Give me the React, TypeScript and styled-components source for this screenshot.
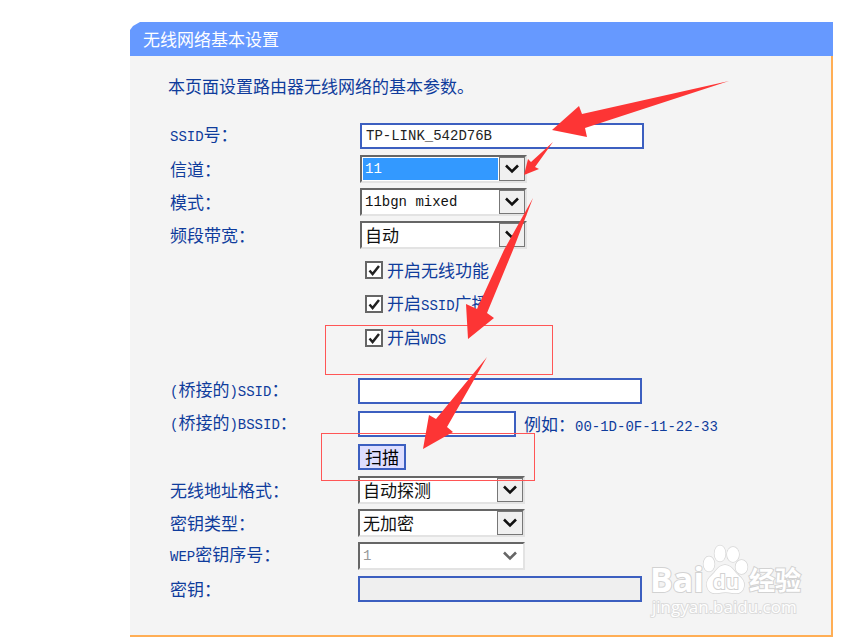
import React, { useState } from "react";
import styled, { createGlobalStyle, css } from "styled-components";

const cjk = `"Noto Sans CJK SC", sans-serif`;
const mono = `"Liberation Mono", "Noto Sans CJK SC", monospace`;
const navy = "#0f3c9c";

const GlobalStyle = createGlobalStyle`
  *, *::before, *::after { box-sizing: border-box; }
  body { margin: 0; background: #fff; font-family: ${cjk}; font-size: 17px; color: ${navy}; }
`;

const Page = styled.main`
  position: relative;
  padding: 22px 17px 0 130px;
`;

const Panel = styled.section`
  position: relative;
`;

const PanelTitle = styled.h1`
  margin: 0;
  padding: 0 13px;
  height: 34px;
  line-height: 34px;
  font-size: 17px;
  font-weight: 400;
  color: #fff;
  background: #6699ff;
  clip-path: polygon(0 8px, 3px 4px, 10px 0, 100% 0, 100% 100%, 0 100%);
`;

const PanelBody = styled.form`
  padding: 18px 0 30px 38px;
  background: #f4f4f4;
  border-right: 2px solid #ffae55;
  border-bottom: 2px solid #ffae55;
`;

const Intro = styled.p`
  margin: 0 0 21px;
  line-height: 24px;
`;

const Group = styled.div<{ $labels: number }>`
  display: grid;
  grid-template-columns: ${(p) => p.$labels}px 1fr;
  grid-auto-rows: 33px;
  align-items: center;
  padding-left: 2px;
`;

const Name = styled.label`
  line-height: 24px;
  white-space: nowrap;
`;

const Latin = styled.span`
  font-family: ${mono};
  font-size: 14px;
`;

const Cell = styled.div`
  grid-column: 2;
  display: flex;
  align-items: center;
  gap: 8px;
`;

const TextBox = styled.input<{ $width: number }>`
  width: ${(p) => p.$width}px;
  height: 26px;
  padding: 0 4px;
  border: 2px solid #3c5fc0;
  border-radius: 0;
  background: #fff;
  color: #222;
  font: 14px ${mono};
  outline: none;
  &:disabled { background: #efefef; }
`;

const ScanButton = styled.button`
  width: 48px;
  height: 26px;
  padding: 0;
  border: 2px solid #3c5fc0;
  background: #dedeff;
  color: #000;
  font: 17px/20px ${cjk};
`;

const SelectFrame = styled.div`
  display: grid;
  width: 167px;
  height: 28px;
  border: 2px solid;
  border-color: #666 #e3e3e3 #e3e3e3 #666;
  background: #fff;
`;

const Select = styled.select<{ $latin?: boolean; $active?: boolean }>`
  grid-area: 1 / 1;
  appearance: none;
  min-width: 0;
  margin: 1px;
  padding: 0 0 0 2px;
  border: 0;
  border-right: 26px solid transparent;
  border-radius: 0;
  outline: none;
  background: ${(p) => (p.$active ? "#3399ff" : "#fff")};
  background-clip: padding-box;
  color: ${(p) => (p.$active ? "#fff" : "#111")};
  font: 17px/22px ${cjk};
  ${(p) => p.$latin && css`font: 14px/22px ${mono};`}
  &:disabled { color: #999; opacity: 1; }
`;

const ArrowBox = styled.span<{ $flat?: boolean }>`
  grid-area: 1 / 1;
  justify-self: end;
  display: grid;
  place-items: center;
  width: 26px;
  pointer-events: none;
  border: ${(p) => (p.$flat ? "0" : "1px solid #777")};
  background: ${(p) => (p.$flat ? "#fff" : "#f0f0f0")};
`;

const Checks = styled.div<{ $indent: number }>`
  display: grid;
  grid-auto-rows: 34px;
  padding: 2px 0 19px ${(p) => p.$indent}px;
`;

const CheckLabel = styled.label`
  display: flex;
  align-items: center;
  gap: 4px;
  line-height: 24px;
`;

const CheckFrame = styled.span`
  display: grid;
  width: 18px;
  height: 18px;
  svg { grid-area: 1 / 1; pointer-events: none; visibility: hidden; }
  input:checked + svg { visibility: visible; }
`;

const CheckInput = styled.input`
  grid-area: 1 / 1;
  appearance: none;
  width: 18px;
  height: 18px;
  margin: 0;
  border: 2px solid #666;
  background: #fff;
`;

const Marks = styled.svg`
  position: absolute;
  top: 0;
  left: 0;
  pointer-events: none;
`;

const Watermark = styled.svg`
  position: absolute;
  right: 23px;
  bottom: 17px;
  pointer-events: none;
`;

function Dropdown(props: { id: string; options: string[]; latin?: boolean; active?: boolean; disabled?: boolean }) {
  const { id, options, latin, active, disabled } = props;
  return (
    <SelectFrame>
      <Select id={id} $latin={latin} $active={active} disabled={disabled}>
        {options.map((o) => <option key={o}>{o}</option>)}
      </Select>
      <ArrowBox $flat={disabled}>
        <svg width="16" height="10" viewBox="0 0 16 10">
          <path d="M2 1.5 L8 7.5 L14 1.5" fill="none" stroke={disabled ? "#666" : "#111"} strokeWidth="2.6" />
        </svg>
      </ArrowBox>
    </SelectFrame>
  );
}

function Check({ children }: { children: React.ReactNode }) {
  const [on, setOn] = useState(true);
  return (
    <CheckLabel>
      <CheckFrame>
        <CheckInput type="checkbox" checked={on} onChange={() => setOn(!on)} />
        <svg width="18" height="18" viewBox="0 0 18 18">
          <path d="M4.5 9.5 L7.6 13 L14 5" fill="none" stroke="#222" strokeWidth="2.5" />
        </svg>
      </CheckFrame>
      <span>{children}</span>
    </CheckLabel>
  );
}

export default function App() {
  return (
    <>
      <GlobalStyle />
      <Page>
        <Panel>
          <PanelTitle>无线网络基本设置</PanelTitle>
          <PanelBody onSubmit={(e) => e.preventDefault()}>
            <Intro>本页面设置路由器无线网络的基本参数。</Intro>

            <Group $labels={190}>
              <Name htmlFor="ssid"><Latin>SSID</Latin>号：</Name>
              <Cell><TextBox id="ssid" $width={284} defaultValue="TP-LINK_542D76B" /></Cell>
              <Name htmlFor="channel">信道：</Name>
              <Cell><Dropdown id="channel" options={["11"]} latin active /></Cell>
              <Name htmlFor="mode">模式：</Name>
              <Cell><Dropdown id="mode" options={["11bgn mixed"]} latin /></Cell>
              <Name htmlFor="band">频段带宽：</Name>
              <Cell><Dropdown id="band" options={["自动"]} /></Cell>
            </Group>

            <Checks $indent={197}>
              <Check>开启无线功能</Check>
              <Check>开启<Latin>SSID</Latin>广播</Check>
              <Check>开启<Latin>WDS</Latin></Check>
            </Checks>

            <Group $labels={188}>
              <Name htmlFor="bridge-ssid"><Latin>(</Latin>桥接的<Latin>)SSID</Latin>：</Name>
              <Cell><TextBox id="bridge-ssid" $width={284} /></Cell>
              <Name htmlFor="bridge-bssid"><Latin>(</Latin>桥接的<Latin>)BSSID</Latin>：</Name>
              <Cell>
                <TextBox id="bridge-bssid" $width={158} />
                <span>例如：<Latin>00-1D-0F-11-22-33</Latin></span>
              </Cell>
              <Cell><ScanButton type="button">扫描</ScanButton></Cell>
              <Name htmlFor="address">无线地址格式：</Name>
              <Cell><Dropdown id="address" options={["自动探测"]} /></Cell>
              <Name htmlFor="key-type">密钥类型：</Name>
              <Cell><Dropdown id="key-type" options={["无加密"]} /></Cell>
              <Name htmlFor="wep"><Latin>WEP</Latin>密钥序号：</Name>
              <Cell><Dropdown id="wep" options={["1"]} latin disabled /></Cell>
              <Name htmlFor="key">密钥：</Name>
              <Cell><TextBox id="key" $width={284} disabled /></Cell>
            </Group>
          </PanelBody>

          <Watermark width="170" height="80" viewBox="640 540 170 80">
            <g fill="#fff" stroke="#d6d6d6" strokeWidth="1.4" paintOrder="stroke">
              <ellipse cx="709" cy="564" rx="5.5" ry="7.5" />
              <ellipse cx="720" cy="553.5" rx="5.5" ry="8" />
              <ellipse cx="733" cy="554.5" rx="6" ry="7.5" />
              <ellipse cx="741.500" cy="567" rx="6" ry="7" />
              <path d="M725 565 C720 565 717 569 714 573 C710 577 706 580 707 586 C708 593 714 594 719 593 C723 592 728 592 732 593 C738 594 743 593 744 586 C745 580 740 577 736 573 C733 569 730 565 725 565Z" />
            </g>
            <g fill="#fff" stroke="#d2d2d2" strokeWidth="2" paintOrder="stroke" fontFamily="Open Sans" fontWeight="700">
              <text x="650" y="592" fontSize="34">Bai</text>
              <text x="713" y="589" fontSize="20">du</text>
              <text x="749" y="590" fontSize="26" fontFamily="Noto Sans CJK SC">经验</text>
              <text x="652" y="613" fontSize="17" fontWeight="400" stroke="#dcdcdc">jingyan.baidu.com</text>
            </g>
          </Watermark>
        </Panel>

        <Marks width="850" height="637" viewBox="0 0 850 637" aria-hidden="true">
          <g fill="none" stroke="#ff5555">
            <rect x="325.500" y="325.500" width="227" height="49" />
            <rect x="321.500" y="433.500" width="213" height="47" />
          </g>
          <g fill="#fd3535">
            <polygon points="552,130 579,106 582,114 729,81 585,128 587,137" />
            <polygon points="524,175 528,159 531,162 553,142 535,167 539,169" />
            <polygon points="468,339 466,304 477,309 504,250 533,198 513,250 487,313 494,318" />
            <polygon points="423,449 429,415 436,419 487,357 447,427 453,432" />
          </g>
        </Marks>
      </Page>
    </>
  );
}
